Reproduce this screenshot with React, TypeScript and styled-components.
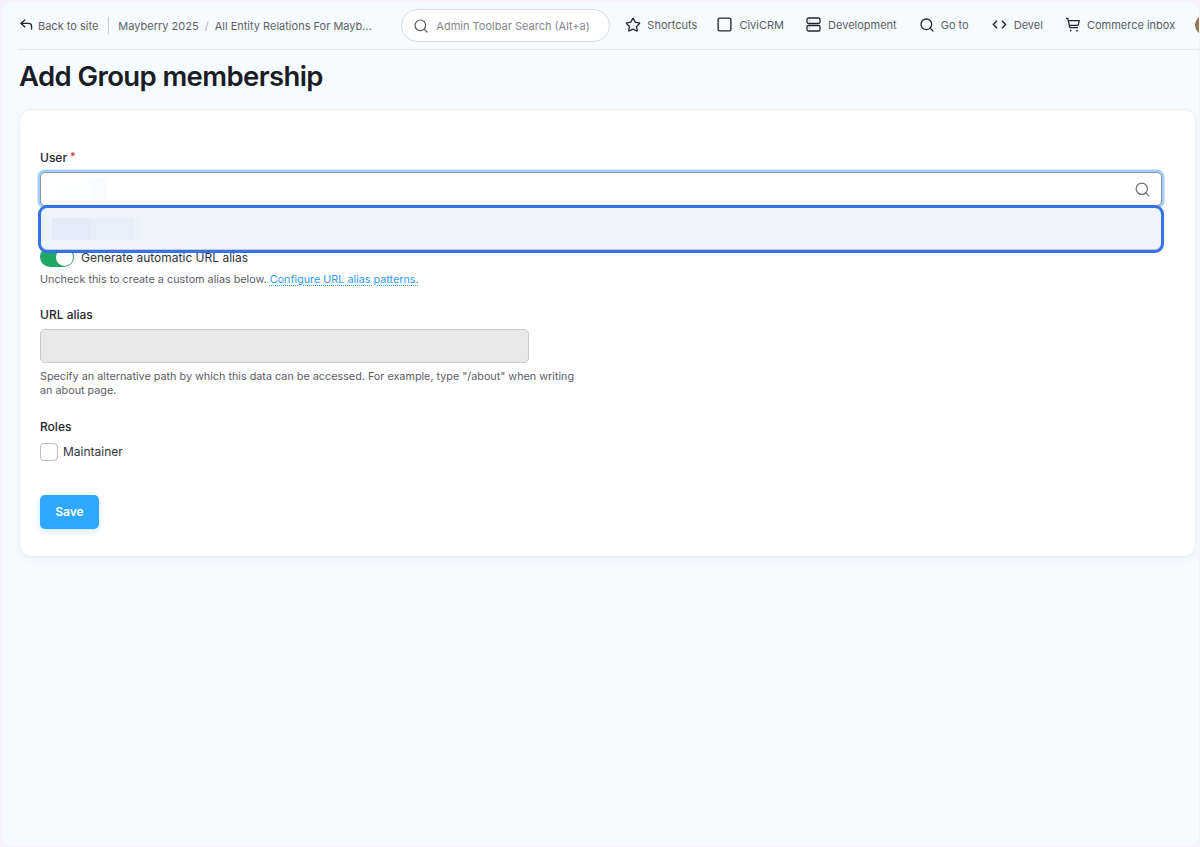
import React from "react";
import styled, { createGlobalStyle } from "styled-components";
import { Search, Star, Square } from "lucide-react";

const GlobalStyle = createGlobalStyle`
  html, body {
    margin: 0;
    padding: 0;
    height: 100%;
    overflow: hidden;
    background: #f5f3f9;
    font-family: Inter, "Liberation Sans", sans-serif;
    -webkit-font-smoothing: antialiased;
  }
`;

const Frame = styled.div`
  box-sizing: border-box;
  width: 1200px;
  height: 847px;
  padding: 2px 1px 2px 2px;
  background: #f5f3f9;
`;

const Page = styled.div`
  box-sizing: border-box;
  width: 1197px;
  height: 843px;
  padding-left: 16px;
  background: #f6fbff;
  border-radius: 9px;
  overflow: hidden;
`;

const Toolbar = styled.header`
  display: flex;
  align-items: center;
  width: 1190px;
  height: 47px;
  border-bottom: 1px solid #e6eaf0;
  color: #55565f;
  font-size: 11px;
  white-space: nowrap;
`;

const BackLink = styled.a`
  flex: none;
  display: flex;
  align-items: center;
  gap: 5px;
  padding-left: 2px;
  padding-right: 10px;
  height: 17px;
  border-right: 1px solid #c9ccd2;
  color: #5f6068;
  svg { margin-top: -3px; }
`;

const Crumbs = styled.nav`
  flex: none;
  display: flex;
  align-items: center;
  box-sizing: border-box;
  width: 292px;
  padding-left: 9px;
  color: #5f6068;
`;

const CrumbSep = styled.span`
  margin: 0 6px;
  color: #a9abb2;
`;

const ToolbarSearch = styled.div`
  flex: none;
  display: flex;
  align-items: center;
  gap: 7px;
  box-sizing: border-box;
  width: 209px;
  height: 33px;
  padding-left: 11px;
  margin-right: 15px;
  background: #fff;
  border: 1px solid #d5d8dd;
  border-radius: 17px;
  color: #85868d;
`;

const ToolItem = styled.a<{ $gap: number; $mr: number }>`
  flex: none;
  display: flex;
  align-items: center;
  gap: ${(p) => p.$gap}px;
  margin-right: ${(p) => p.$mr}px;
  margin-top: -2px;
  color: #5a5b63;
  svg { color: #26272e; }
`;

const Avatar = styled.span`
  flex: none;
  width: 20px;
  height: 20px;
  margin-top: -2px;
  border-radius: 50%;
  background: radial-gradient(circle at 70% 45%, #d9b98a, #7a5a38);
`;

const Title = styled.h1`
  margin: 8px 0 15px 1px;
  font-size: 27.5px;
  line-height: 36px;
  font-weight: 600;
  letter-spacing: -0.6px;
  color: #1a1c26;
`;

const Card = styled.main`
  box-sizing: border-box;
  width: 1177px;
  height: 448px;
  margin-left: 1px;
  padding: 40px 20px 0;
  background: #fff;
  border: 1px solid #eceef2;
  border-radius: 12px;
  box-shadow: 0 2px 6px rgba(30, 50, 90, 0.05);
`;

const UserField = styled.div`
  position: relative;
  height: 97px;
`;

const Label = styled.label`
  display: block;
  font-size: 12px;
  line-height: 16px;
  font-weight: 500;
  color: #26272e;
`;

const Required = styled.span`
  position: relative;
  top: -2px;
  margin-left: 3px;
  font-size: 11px;
  color: #d7262b;
`;

const UserInput = styled.div`
  display: flex;
  align-items: center;
  justify-content: flex-end;
  box-sizing: border-box;
  width: 1122px;
  height: 34px;
  margin-top: 6px;
  padding-right: 10px;
  background: #fff;
  border: 1px solid #8f9297;
  border-radius: 5px;
  box-shadow: 0 0 0 2.5px #a0d0fb;
  color: #6d6e73;
`;

const BlurPatch = styled.span<{ $w: number; $bg: string }>`
  display: block;
  width: ${(p) => p.$w}px;
  height: 22px;
  background: ${(p) => p.$bg};
`;

const InputBlur = styled.div`
  display: flex;
  margin-right: auto;
  margin-left: 11px;
`;

const Suggestion = styled.div`
  position: absolute;
  left: -2px;
  top: 55px;
  display: flex;
  align-items: center;
  box-sizing: border-box;
  width: 1126px;
  height: 48px;
  padding-left: 11px;
  background: #edf4fd;
  border: 3px solid #3572e8;
  border-radius: 9px;
  box-shadow: inset 0 -1px 0 #c6cad2;
`;

const ToggleRow = styled.div`
  display: flex;
  align-items: center;
  gap: 7px;
  height: 20px;
`;

const Toggle = styled.span`
  display: flex;
  align-items: center;
  justify-content: flex-end;
  box-sizing: border-box;
  width: 34px;
  height: 20px;
  padding-right: 1px;
  background: #1fa765;
  border-radius: 10px;
`;

const Knob = styled.span`
  width: 17px;
  height: 17px;
  border-radius: 50%;
  background: #fff;
`;

const ToggleText = styled.span`
  font-size: 12px;
  color: #33343b;
`;

const Hint = styled.p<{ $width?: number; $top: number }>`
  margin: ${(p) => p.$top}px 0 0;
  width: ${(p) => (p.$width ? `${p.$width}px` : "auto")};
  font-size: 10.8px;
  line-height: 14.5px;
  color: #5c5d65;
`;

const HintLink = styled.a`
  color: #2f9bf0;
  text-decoration: underline dotted;
  text-underline-offset: 2px;
`;

const AliasField = styled.div`
  margin-top: 19px;
`;

const DisabledInput = styled.div`
  box-sizing: border-box;
  width: 489px;
  height: 34px;
  margin-top: 6px;
  background: #e9e9e9;
  border: 1px solid #c9cacd;
  border-radius: 5px;
`;

const RolesField = styled.div`
  margin-top: 20px;
`;

const CheckRow = styled.div`
  display: flex;
  align-items: center;
  gap: 5px;
  margin-top: 8px;
`;

const CheckBox = styled.span`
  box-sizing: border-box;
  width: 18px;
  height: 18px;
  background: #fff;
  border: 1px solid #b9bcc3;
  border-radius: 4px;
`;

const CheckText = styled.span`
  font-size: 12px;
  color: #33343b;
`;

const SaveButton = styled.button`
  display: block;
  width: 59px;
  height: 34px;
  margin-top: 34px;
  padding: 0;
  background: #2ea8ff;
  border: 0;
  border-radius: 5px;
  box-shadow: 0 2px 6px rgba(46, 168, 255, 0.25);
  color: #fff;
  font-family: inherit;
  font-size: 12px;
  font-weight: 600;
`;

const BackIcon = () => (
  <svg width="13" height="11" viewBox="0 0 13 11" fill="none" stroke="#26272e" strokeWidth="1.3" strokeLinecap="round" strokeLinejoin="round">
    <path d="M4.8 1 1 4.4l3.8 3.4" />
    <path d="M1 4.4h7.6a3 3 0 0 1 3 3v2.8" />
  </svg>
);

const ServerIcon = () => (
  <svg width="15" height="15" viewBox="0 0 15 15" fill="none" stroke="currentColor" strokeWidth="1.3">
    <rect x="1" y="1" width="13" height="5.5" rx="1.6" />
    <rect x="1" y="8.5" width="13" height="5.5" rx="1.6" />
    <path d="M3.5 3.7h.4M3.5 11.2h.4" />
  </svg>
);

const CodeIcon = () => (
  <svg width="15" height="15" viewBox="0 0 15 15" fill="none" stroke="currentColor" strokeWidth="1.4">
    <path d="M5 3.8 1.4 7.5 5 11.2" />
    <path d="M10 3.8l3.6 3.7-3.6 3.7" />
  </svg>
);

const CartIcon = () => (
  <svg width="16" height="16" viewBox="0 0 16 16" fill="none" stroke="currentColor" strokeWidth="1.25" strokeLinejoin="round">
    <path d="M1 1.4h1.8l2 9.2h8.2" />
    <path d="M3.3 3.6h11l-1.1 4.8H4.3" />
    <circle cx="5.6" cy="13.6" r="0.9" fill="currentColor" stroke="none" />
    <circle cx="12" cy="13.6" r="0.9" fill="currentColor" stroke="none" />
  </svg>
);

const App = () => {
  return (
    <>
      <GlobalStyle />
      <Frame>
        <Page>
          <Toolbar>
            <BackLink>
              <BackIcon />
              Back to site
            </BackLink>
            <Crumbs>
              Mayberry 2025
              <CrumbSep>/</CrumbSep>
              All Entity Relations For Mayb...
            </Crumbs>
            <ToolbarSearch>
              <Search size={16} strokeWidth={1.8} color="#55565f" />
              Admin Toolbar Search (Alt+a)
            </ToolbarSearch>
            <ToolItem $gap={6} $mr={19}>
              <Star size={16} strokeWidth={1.9} />
              Shortcuts
            </ToolItem>
            <ToolItem $gap={6} $mr={22}>
              <Square size={17} strokeWidth={1.9} />
              CiviCRM
            </ToolItem>
            <ToolItem $gap={7} $mr={22}>
              <ServerIcon />
              Development
            </ToolItem>
            <ToolItem $gap={6} $mr={23}>
              <Search size={16} strokeWidth={1.9} />
              Go to
            </ToolItem>
            <ToolItem $gap={7} $mr={22}>
              <CodeIcon />
              Devel
            </ToolItem>
            <ToolItem $gap={6} $mr={20}>
              <CartIcon />
              Commerce inbox
            </ToolItem>
            <Avatar />
          </Toolbar>
          <Title>Add Group membership</Title>
          <Card>
            <UserField>
              <Label>
                User<Required>*</Required>
              </Label>
              <UserInput>
                <InputBlur>
                  <BlurPatch $w={39} $bg="#feffff" />
                  <BlurPatch $w={16} $bg="#f9fcff" />
                </InputBlur>
                <Search size={17} strokeWidth={1.7} />
              </UserInput>
              <Suggestion>
                <BlurPatch $w={39} $bg="#e2edf9" />
                <BlurPatch $w={43} $bg="#e7f0fa" />
                <BlurPatch $w={7} $bg="#eaf2fc" />
              </Suggestion>
            </UserField>
            <ToggleRow>
              <Toggle>
                <Knob />
              </Toggle>
              <ToggleText>Generate automatic URL alias</ToggleText>
            </ToggleRow>
            <Hint $top={6}>
              Uncheck this to create a custom alias below.{" "}
              <HintLink>Configure URL alias patterns.</HintLink>
            </Hint>
            <AliasField>
              <Label>URL alias</Label>
              <DisabledInput />
              <Hint $top={7} $width={540}>
                Specify an alternative path by which this data can be accessed. For example, type "/about" when writing an about page.
              </Hint>
            </AliasField>
            <RolesField>
              <Label>Roles</Label>
              <CheckRow>
                <CheckBox />
                <CheckText>Maintainer</CheckText>
              </CheckRow>
            </RolesField>
            <SaveButton>Save</SaveButton>
          </Card>
        </Page>
      </Frame>
    </>
  );
};

export default App;
